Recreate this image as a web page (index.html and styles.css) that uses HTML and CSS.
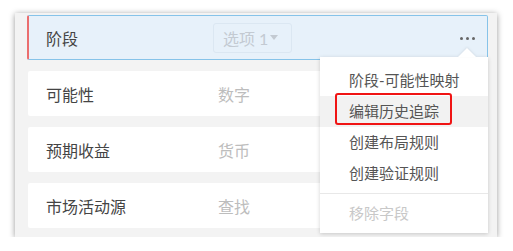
FILE: index.html
```html
<!DOCTYPE html>
<html lang="zh">
<head>
  <meta charset="UTF-8">
  <title>字段</title>
  <link rel="stylesheet" href="styles.css">
</head>
<body>
  <div class="panel">
    <div class="field-row active">
      <span class="field-label">阶段</span>
      <span class="field-select">选项 1<span class="caret-down"></span></span>
      <span class="more-btn"><i></i><i></i><i></i></span>
    </div>
    <div class="field-row">
      <span class="field-label">可能性</span>
      <span class="field-type">数字</span>
    </div>
    <div class="field-row">
      <span class="field-label">预期收益</span>
      <span class="field-type">货币</span>
    </div>
    <div class="field-row">
      <span class="field-label">市场活动源</span>
      <span class="field-type">查找</span>
    </div>

    <div class="menu">
      <div class="menu-item">阶段-可能性映射</div>
      <div class="menu-item hover">编辑历史追踪</div>
      <div class="menu-item">创建布局规则</div>
      <div class="menu-item">创建验证规则</div>
      <div class="menu-divider"></div>
      <div class="menu-item disabled">移除字段</div>
      <div class="mark"></div>
    </div>
  </div>
</body>
</html>
```

FILE: styles.css
```css
body {
  margin: 0;
  padding: 13px 0 0 15px;
  background: #fff;
  font-family: "Lato", "Noto Sans CJK SC", sans-serif;
}
.panel {
  position: relative;
  width: 482px;
  height: 224px;
  box-sizing: border-box;
  padding: 2px 9px 9px 13px;
  background: #f3f3f3;
  box-shadow: 0 1px 6px rgba(0,0,0,0.4);
  display: flex;
  flex-direction: column;
  gap: 11px;
}
.field-row {
  display: flex;
  align-items: center;
  height: 45px;
  box-sizing: border-box;
  background: #fff;
  border-radius: 2px;
}
.field-row.active {
  background: #e7f1fa;
  border: 1px solid #86c3e9;
  border-left: 2px solid #eb6e6e;
  margin-left: -1px;
}
.field-label {
  width: 172px;
  padding-left: 18px;
  font-size: 16px;
  color: #444;
}
.active .field-label {
  padding-left: 17px;
}
.field-type {
  font-size: 16px;
  color: #bdbdbd;
}
.field-select {
  display: flex;
  align-items: center;
  height: 30px;
  width: 79px;
  box-sizing: border-box;
  margin-left: -5px;
  padding: 0 9px;
  border: 1px solid #dbe7f2;
  border-radius: 3px;
  font-size: 16px;
  color: #c3cad2;
}
.caret-down {
  width: 0;
  height: 0;
  margin-left: 2px;
  border-left: 4px solid transparent;
  border-right: 4px solid transparent;
  border-top: 5px solid #c3cad2;
}
.more-btn {
  margin-left: auto;
  margin-right: 12px;
  display: flex;
  gap: 3px;
  padding-top: 2px;
}
.more-btn i {
  width: 3px;
  height: 3px;
  border-radius: 50%;
  background: #666;
}
.menu {
  position: absolute;
  left: 305px;
  top: 44px;
  width: 168px;
  padding: 8px 0 4px;
  background: #fff;
  box-shadow: 0 1px 4px rgba(0,0,0,0.18);
}
.menu::before {
  content: "";
  position: absolute;
  left: 138px;
  top: -9px;
  width: 0;
  height: 0;
  border-left: 9px solid transparent;
  border-right: 9px solid transparent;
  border-bottom: 9px solid #fff;
  filter: drop-shadow(0 -1px 1px rgba(0,0,0,0.08));
}
.menu-item {
  height: 31px;
  line-height: 31px;
  padding-left: 29px;
  font-size: 15px;
  color: #555;
}
.menu-item.hover {
  background: #f2f2f2;
}
.menu-item.disabled {
  color: #c8c8c8;
}
.menu-divider {
  height: 1px;
  margin: 4px 0;
  background: #e8e8e8;
}
.mark {
  position: absolute;
  left: 15px;
  top: 36px;
  width: 117px;
  height: 32px;
  box-sizing: border-box;
  border: 2px solid #f01414;
  border-radius: 3px;
}
```
